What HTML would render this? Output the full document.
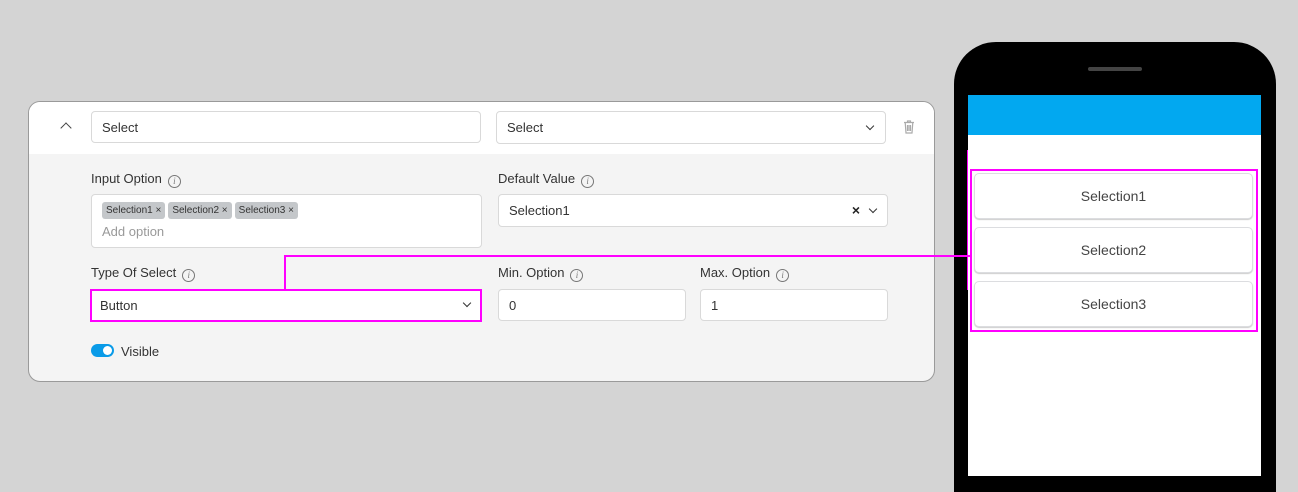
<!DOCTYPE html>
<html><head><style>
*{box-sizing:border-box;margin:0;padding:0}
body{width:1298px;height:476px;background:#d4d4d4;font-family:"Liberation Sans",sans-serif;position:relative;overflow:hidden;color:#333}
.a{position:absolute}
.panel{left:28px;top:101px;width:907px;height:281px;border:1px solid #9a9a9a;border-radius:12px;background:#f4f4f4;overflow:hidden}
.hdr{left:0;top:0;width:100%;height:52px;background:#fff}
.inp{position:absolute;background:#fff;border:1px solid #d9d9d9;border-radius:4px;font-size:13px;color:#333;padding-left:10px;display:flex;align-items:center}
.lbl{position:absolute;font-size:13px;color:#333}
.i{display:inline-block;width:13px;height:13px;border:1px solid #777;border-radius:50%;font-size:9px;line-height:11px;text-align:center;color:#777;font-style:italic;margin-left:6px;vertical-align:-1px;font-family:"Liberation Serif",serif}
.chev{position:absolute;width:6px;height:6px;border-right:1.5px solid #333;border-bottom:1.5px solid #333;transform:rotate(45deg)}
.tag{display:inline-block;background:#c4c7ca;border-radius:3px;font-size:10px;color:#333;padding:3px 4px;margin-right:3px}
.pb{position:absolute;left:974px;width:279px;height:46px;background:#fff;border:1px solid #dcdde0;border-radius:5px;font-size:14px;color:#444;text-align:center;line-height:44px;box-shadow:0 1px 1px #ccc}
.pk{position:absolute;background:#f0f}
</style></head><body>
<div class="a panel">
 <div class="a hdr"></div>
 <div class="a" style="left:33px;top:22px;width:8px;height:8px;border-left:1.5px solid #444;border-top:1.5px solid #444;transform:rotate(45deg)"></div>
 <div class="inp" style="left:62px;top:9px;width:390px;height:32px">Select</div>
 <div class="inp" style="left:467px;top:9px;width:390px;height:33px">Select<div class="chev" style="right:12px;top:11px"></div></div>
 <svg class="a" style="left:874px;top:18px" width="12" height="14" viewBox="0 0 12 14"><path d="M1 2.5h10M4.5 2.5V1h3v1.5M2.2 2.5l.8 10.5h6l.8-10.5M4.5 5v6M6 5v6M7.5 5v6" stroke="#aaa" fill="none" stroke-width="1.2"/></svg>
 <div class="lbl" style="left:62px;top:69px">Input Option<span class="i">i</span></div>
 <div class="inp" style="left:62px;top:92px;width:391px;height:54px;display:block;padding:6px 10px">
  <div><span class="tag">Selection1 ×</span><span class="tag">Selection2 ×</span><span class="tag">Selection3 ×</span></div>
  <div style="color:#999;margin-top:5px">Add option</div>
 </div>
 <div class="lbl" style="left:469px;top:69px">Default Value<span class="i">i</span></div>
 <div class="inp" style="left:469px;top:92px;width:390px;height:33px">Selection1<span class="a" style="right:27px;top:7px;font-size:14px;font-weight:bold;color:#222">×</span><div class="chev" style="right:11px;top:11px"></div></div>
 <div class="lbl" style="left:62px;top:163px">Type Of Select<span class="i">i</span></div>
 <div class="inp" style="left:61px;top:187px;width:392px;height:33px;border:none;border-radius:0;box-shadow:inset 0 0 0 2px #f0f">Button<div class="chev" style="right:12px;top:11px"></div></div>
 <div class="lbl" style="left:469px;top:163px">Min. Option<span class="i">i</span></div>
 <div class="inp" style="left:469px;top:187px;width:188px;height:32px">0</div>
 <div class="lbl" style="left:671px;top:163px">Max. Option<span class="i">i</span></div>
 <div class="inp" style="left:671px;top:187px;width:188px;height:32px">1</div>
 <div class="a" style="left:62px;top:242px;width:23px;height:13px;border-radius:7px;background:#0a9be8"><div class="a" style="right:2px;top:2px;width:9px;height:9px;border-radius:50%;background:#fff"></div></div>
 <div class="lbl" style="left:92px;top:242px">Visible</div>
</div>
<div class="a" style="left:954px;top:42px;width:322px;height:450px;background:#000;border-radius:42px 42px 0 0"></div>
<div class="a" style="left:1088px;top:67px;width:54px;height:4px;border-radius:2px;background:#444"></div>
<div class="a" style="left:968px;top:95px;width:293px;height:381px;background:#fff"></div>
<div class="a" style="left:968px;top:95px;width:293px;height:40px;background:#02a8f0"></div>
<div class="pb" style="top:173px">Selection1</div>
<div class="pb" style="top:227px">Selection2</div>
<div class="pb" style="top:281px">Selection3</div>
<div class="pk" style="left:284px;top:256px;width:2px;height:33px"></div>
<div class="pk" style="left:284px;top:255px;width:688px;height:2px"></div>
<div class="pk" style="left:967px;top:150px;width:1px;height:140px"></div>
<div class="a" style="left:970px;top:169px;width:288px;height:163px;box-shadow:inset 0 0 0 2px #f0f"></div>
</body></html>
